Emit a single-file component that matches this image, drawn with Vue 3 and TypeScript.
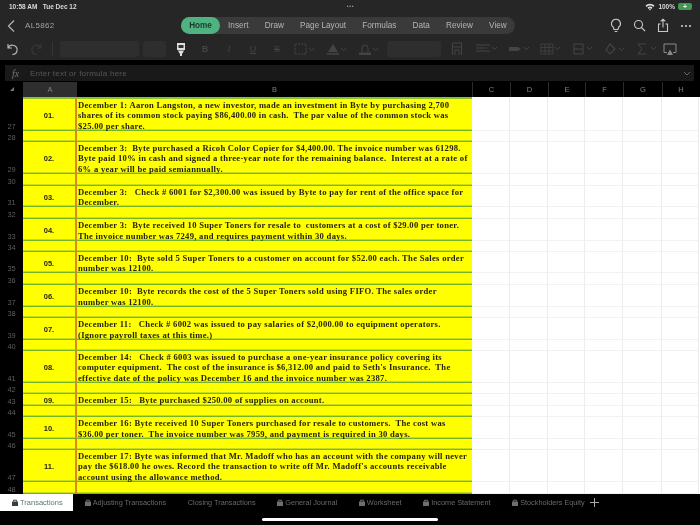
<script setup lang="ts">
interface SheetRow {
  num: number
  h: number
  tag?: string
  lines?: string[]
}

const tabs = ["Home", "Insert", "Draw", "Page Layout", "Formulas", "Data", "Review", "View"]
const columns = ["C", "D", "E", "F", "G", "H"]

const rows: SheetRow[] = [
  { num: 27, h: 34, tag: "01.", lines: [
    "December 1: Aaron Langston, a new investor, made an investment in Byte by purchasing 2,700",
    "shares of its common stock paying $86,400.00 in cash.  The par value of the common stock was",
    "$25.00 per share.",
  ] },
  { num: 28, h: 11 },
  { num: 29, h: 32, tag: "02.", lines: [
    "December 3:  Byte purchased a Ricoh Color Copier for $4,400.00. The invoice number was 61298.",
    "Byte paid 10% in cash and signed a three-year note for the remaining balance.  Interest at a rate of",
    "6% a year will be paid semiannually.",
  ] },
  { num: 30, h: 12 },
  { num: 31, h: 21, tag: "03.", lines: [
    "December 3:   Check # 6001 for $2,300.00 was issued by Byte to pay for rent of the office space for",
    "December.",
  ] },
  { num: 32, h: 12 },
  { num: 33, h: 22, tag: "04.", lines: [
    "December 3:  Byte received 10 Super Toners for resale to  customers at a cost of $29.00 per toner.",
    "The invoice number was 7249, and requires payment within 30 days.",
  ] },
  { num: 34, h: 11 },
  { num: 35, h: 21, tag: "05.", lines: [
    "December 10:  Byte sold 5 Super Toners to a customer on account for $52.00 each. The Sales order",
    "number was 12100.",
  ] },
  { num: 36, h: 12 },
  { num: 37, h: 22, tag: "06.", lines: [
    "December 10:  Byte records the cost of the 5 Super Toners sold using FIFO. The sales order",
    "number was 12100.",
  ] },
  { num: 38, h: 11 },
  { num: 39, h: 22, tag: "07.", lines: [
    "December 11:   Check # 6002 was issued to pay salaries of $2,000.00 to equipment operators.",
    "(Ignore payroll taxes at this time.)",
  ] },
  { num: 40, h: 11 },
  { num: 41, h: 32, tag: "08.", lines: [
    "December 14:   Check # 6003 was issued to purchase a one-year insurance policy covering its",
    "computer equipment.  The cost of the insurance is $6,312.00 and paid to Seth's Insurance.  The",
    "effective date of the policy was December 16 and the invoice number was 2387.",
  ] },
  { num: 42, h: 11 },
  { num: 43, h: 12, tag: "09.", lines: ["December 15:   Byte purchased $250.00 of supplies on account."] },
  { num: 44, h: 11 },
  { num: 45, h: 22, tag: "10.", lines: [
    "December 16: Byte received 10 Super Toners purchased for resale to customers.  The cost was",
    "$36.00 per toner.  The invoice number was 7959, and payment is required in 30 days.",
  ] },
  { num: 46, h: 11 },
  { num: 47, h: 32, tag: "11.", lines: [
    "December 17: Byte was informed that Mr. Madoff who has an account with the company will never",
    "pay the $618.00 he owes. Record the transaction to write off Mr. Madoff's accounts receivable",
    "account using the allowance method.",
  ] },
  { num: 48, h: 12 },
]

const sheets = [
  { name: "Adjusting Transactions", locked: true },
  { name: "Closing Transactions", locked: false },
  { name: "General Journal", locked: true },
  { name: "Worksheet", locked: true },
  { name: "Income Statement", locked: true },
  { name: "Stockholders Equity", locked: true },
]
</script>

<template>
  <div class="screen">
    <div class="chrome">
      <div class="status">
        <span class="time">10:58 AM&nbsp;&nbsp;&nbsp;Tue Dec 12</span>
        <span class="status-dots">•••</span>
        <span class="status-right">
          <svg width="10" height="8" viewBox="0 0 10 8"><path d="M0.5 2.6a6.4 6.4 0 0 1 9 0L8.3 3.9a4.7 4.7 0 0 0-6.6 0zM2.5 4.7a3.6 3.6 0 0 1 5 0L6.3 5.9a1.9 1.9 0 0 0-2.6 0zM5 7.6 3.9 6.5a1.6 1.6 0 0 1 2.2 0z" fill="#ddd" /></svg>
          <span>100%</span>
          <span class="battery">+</span>
        </span>
      </div>

      <div class="nav">
        <svg class="back" width="10" height="14" viewBox="0 0 10 14"><path d="M8 1.5 2.5 7 8 12.5" fill="none" stroke="#b5b5b5" stroke-width="1.2" /></svg>
        <span class="doc-name">AL5862</span>
        <div class="tab-pill">
          <span v-for="(tab, i) in tabs" :key="tab" class="ribbon-tab" :class="{ active: i === 0 }">{{ tab }}</span>
        </div>
        <div class="nav-icons">
          <svg width="12" height="15" viewBox="0 0 12 15"><path d="M6 1.2a4.4 4.4 0 0 0-2.6 8l.6 2.3h4l.6-2.3A4.4 4.4 0 0 0 6 1.2zM4.6 13.5h2.8" fill="none" stroke="#c8c8c8" stroke-width="1.1" /></svg>
          <svg width="13" height="13" viewBox="0 0 13 13"><circle cx="5.5" cy="5.5" r="4" fill="none" stroke="#c8c8c8" stroke-width="1.1" /><path d="m8.5 8.5 3.6 3.6" stroke="#c8c8c8" stroke-width="1.2" /></svg>
          <svg width="12" height="15" viewBox="0 0 12 15"><path d="M3.6 6H1.5v7.5h9V6H8.4M6 9.5V1.2M3.6 3.4 6 1.2l2.4 2.2" fill="none" stroke="#c8c8c8" stroke-width="1.1" /></svg>
          <svg width="12" height="4" viewBox="0 0 12 4"><circle cx="2" cy="2" r="1.1" fill="#c8c8c8" /><circle cx="6" cy="2" r="1.1" fill="#c8c8c8" /><circle cx="10" cy="2" r="1.1" fill="#c8c8c8" /></svg>
        </div>
      </div>

      <div class="toolbar">
        <svg class="undo" width="14" height="14" viewBox="0 0 14 14"><path d="M2 2v4h4M2.3 6a4.6 4.6 0 1 1 4 6.5" fill="none" stroke="#b5b5b5" stroke-width="1.2" /></svg>
        <svg class="redo" width="14" height="14" viewBox="0 0 14 14"><path d="M12 2v4H8M11.7 6a4.6 4.6 0 1 0-4 6.5" fill="none" stroke="#383838" stroke-width="1.2" /></svg>
        <span class="divider"></span>
        <span class="field font-name"></span>
        <span class="field font-size"></span>
        <svg class="brush" width="10" height="15" viewBox="0 0 10 15"><path d="M1 1h8v7H1zM2 8.5h6l-1.5 3h-3zM4 11.5h2V14H4z" fill="#ddd" /><path d="M2.5 3h5v3h-5z" fill="#333" /></svg>
        <span class="tool fmt bold first-fmt">B</span>
        <span class="tool fmt italic">I</span>
        <span class="tool fmt under">U</span>
        <span class="tool fmt strike">S</span>
        <span class="tool wide">
          <svg width="22" height="12" viewBox="0 0 22 12"><path d="M1 1h11v10H1z" fill="none" stroke="#444" stroke-dasharray="2 1" /><path d="m15 5 2.5 2.5L20 5" fill="none" stroke="#444" /></svg>
        </span>
        <span class="tool wide">
          <svg width="22" height="13" viewBox="0 0 22 13"><path d="M7 1 2 9h10z" fill="#444" /><path d="M1 11h12" stroke="#444" stroke-width="1.6" /><path d="m15 5 2.5 2.5L20 5" fill="none" stroke="#444" /></svg>
        </span>
        <span class="tool wide">
          <svg width="22" height="13" viewBox="0 0 22 13"><path d="M4 9V5a3 3 0 0 1 6 0v4" fill="none" stroke="#444" /><path d="M1 9.5h12V12H1z" fill="#444" /><path d="m15 5 2.5 2.5L20 5" fill="none" stroke="#444" /></svg>
        </span>
        <span class="field size-box"></span>
        <svg class="wrap" width="12" height="14" viewBox="0 0 12 14"><path d="M1.5 1h9v12M1.5 13V1M1.5 5h9M4 13V8h4v5" fill="none" stroke="#444" /></svg>
        <span class="tool wide gap-a">
          <svg width="22" height="10" viewBox="0 0 22 10"><path d="M0 1h14M0 4h11M0 7h14" stroke="#444" /><path d="m16 3 2.5 2.5L21 3" fill="none" stroke="#444" /></svg>
        </span>
        <span class="tool wide">
          <svg width="22" height="10" viewBox="0 0 22 10"><path d="M1 3h9l3 2-3 2H1z" fill="#444" /><path d="m16 3 2.5 2.5L21 3" fill="none" stroke="#444" /></svg>
        </span>
        <span class="tool wide">
          <svg width="22" height="12" viewBox="0 0 22 12"><path d="M1 1h12v10H1zM1 4.5h12M1 8h12M5 1v10M9 1v10" fill="none" stroke="#444" stroke-width=".8" /><path d="m15 4 2.5 2.5L20 4" fill="none" stroke="#444" /></svg>
        </span>
        <span class="tool wide">
          <svg width="22" height="12" viewBox="0 0 22 12"><path d="M2 1h9v10H2zM2 6h9" fill="none" stroke="#444" /><path d="m15 4 2.5 2.5L20 4" fill="none" stroke="#444" /></svg>
        </span>
        <span class="tool wide">
          <svg width="22" height="13" viewBox="0 0 22 13"><path d="m6 1 5 5-5 5-4-4z" fill="none" stroke="#444" stroke-width="1.2" /><path d="m15 5 2.5 2.5L20 5" fill="none" stroke="#444" /></svg>
        </span>
        <span class="tool wide">
          <svg width="22" height="12" viewBox="0 0 22 12"><path d="M10 1H2l4 5-4 5h8" fill="none" stroke="#444" /><path d="m15 4 2.5 2.5L20 4" fill="none" stroke="#444" /></svg>
        </span>
        <svg class="present" width="14" height="13" viewBox="0 0 14 13"><path d="M4 9.5H1V1h12v8.5h-3" fill="none" stroke="#8a8a8a" /><path d="M7 6.5 4 12h6z" fill="#8a8a8a" /></svg>
      </div>
    </div>

    <div class="formula-wrap">
      <div class="formula">
        <span class="fx">fx</span>
        <span class="placeholder">Enter text or formula here</span>
        <svg class="caret" width="8" height="5" viewBox="0 0 8 5"><path d="m1 1 3 3 3-3" fill="none" stroke="#666" /></svg>
      </div>
    </div>

    <div class="grid-row head">
      <span class="corner"><i></i></span>
      <span class="head-a">A</span>
      <span class="head-cell">B</span>
      <span v-for="col in columns" :key="col" class="head-cell line">{{ col }}</span>
    </div>

    <div class="sheet">
      <div v-for="(row, i) in rows" :key="row.num" class="grid-row" :style="{ height: row.h + 'px' }">
        <span class="row-num">{{ row.num }}</span>
        <span class="cell-a" :class="{ first: i === 0 }">{{ row.tag }}</span>
        <div class="cell-b" :class="{ first: i === 0 }">
          <div v-for="line in row.lines" :key="line" class="text-line">{{ line }}</div>
        </div>
        <span v-for="col in columns" :key="col" class="blank"></span>
      </div>
    </div>

    <div class="tabbar">
      <div class="sheet-tabs">
        <span class="sheet-tab current">
          <svg class="lock" width="6" height="7" viewBox="0 0 6 7"><path d="M0 2.5h6V7H0z" fill="#3d3d3d" /><path d="M1.5 2.5V1.2h3v1.3" fill="none" stroke="#3d3d3d" /></svg>
          Transactions
        </span>
        <span v-for="sheet in sheets" :key="sheet.name" class="sheet-tab">
          <svg v-if="sheet.locked" class="lock" width="6" height="7" viewBox="0 0 6 7"><path d="M0 2.5h6V7H0z" fill="#6e6e6e" /><path d="M1.5 2.5V1.2h3v1.3" fill="none" stroke="#6e6e6e" /></svg>
          {{ sheet.name }}
        </span>
        <svg class="plus" width="9" height="9" viewBox="0 0 9 9"><path d="M4.5 0v9M0 4.5h9" stroke="#aaa" /></svg>
      </div>
      <div class="home-bar"></div>
    </div>
  </div>
</template>

<style scoped>
.screen {
  width: 700px;
  height: 525px;
  overflow: hidden;
  display: flex;
  flex-direction: column;
  background: #000;
  font-family: "Liberation Sans", Arial, sans-serif;
  filter: blur(0.35px);
}

.chrome {
  height: 60px;
  background: #262626;
}

.status {
  height: 13px;
  padding: 0 8px 0 9px;
  display: grid;
  grid-template-columns: 1fr auto 1fr;
  align-items: center;
  font-size: 6.5px;
  font-weight: bold;
  color: #d8d8d8;
}

.status-dots {
  font-size: 5px;
  letter-spacing: 0.8px;
  color: #999;
  margin-top: -2px;
}

.status-right {
  display: flex;
  justify-content: flex-end;
  align-items: center;
  gap: 3px;
}

.battery {
  width: 14px;
  height: 7px;
  border-radius: 2px;
  background: #3f9a4f;
  color: #eee;
  font-size: 7px;
  line-height: 7px;
  text-align: center;
}

.nav {
  height: 25px;
  display: flex;
  align-items: center;
}

.back {
  margin-left: 6px;
}

.doc-name {
  margin-left: 9px;
  width: 156px;
  font-size: 8px;
  letter-spacing: 0.3px;
  color: #a0a0a0;
}

.tab-pill {
  width: 334px;
  height: 17px;
  border-radius: 9px;
  background: #3a3a3a;
  display: flex;
  align-items: center;
  font-size: 8.2px;
  color: #b4b4b4;
}

.ribbon-tab {
  flex-shrink: 0;
  padding: 0 8.1px;
  line-height: 17px;
  white-space: nowrap;
}

.ribbon-tab.active {
  width: 39px;
  padding: 0;
  text-align: center;
  border-radius: 9px;
  background: #4fb381;
  color: #1c3a2c;
  font-weight: bold;
}

.nav-icons {
  margin-left: 95px;
  display: flex;
  align-items: center;
  gap: 11px;
}

.toolbar {
  height: 22px;
  display: flex;
  align-items: center;
}

.undo {
  margin-left: 6px;
}

.redo {
  margin-left: 9px;
}

.divider {
  width: 1px;
  height: 15px;
  margin: 0 7px 0 9px;
  background: #343434;
}

.field {
  height: 16px;
  background: #2e2e2e;
  border-radius: 2px;
}

.font-name {
  width: 79px;
}

.font-size {
  width: 23px;
  margin-left: 4px;
}

.brush {
  margin: 0 0 0 10px;
}

.tool {
  width: 24px;
  text-align: center;
  color: #444;
  display: flex;
  justify-content: center;
}

.fmt {
  font-size: 9px;
}

.first-fmt {
  margin-left: 7px;
}

.bold {
  font-weight: bold;
}

.italic {
  font-style: italic;
  font-family: "Liberation Serif", serif;
}

.under {
  text-decoration: underline;
}

.strike {
  text-decoration: line-through;
}

.wide {
  width: 32px;
}

.size-box {
  width: 54px;
  margin-left: 2px;
}

.wrap {
  margin-left: 10px;
}

.gap-a {
  margin-left: 8px;
}

.formula-wrap {
  height: 22px;
  padding: 5px 6px 1px 5px;
  box-sizing: border-box;
}

.formula {
  height: 16px;
  background: #191919;
  display: flex;
  align-items: center;
}

.fx {
  margin-left: 7px;
  width: 18px;
  font: italic 10px "Liberation Serif", serif;
  color: #777;
}

.placeholder {
  font-size: 8.1px;
  letter-spacing: 0.2px;
  color: #565656;
}

.caret {
  margin-left: auto;
  margin-right: 3px;
}

.grid-row {
  display: grid;
  grid-template-columns: 23px 54px 395px 38px 38px 37px 38px 39px 37px;
  grid-template-rows: minmax(0, 1fr);
}

.head {
  height: 15px;
  line-height: 15px;
  font-size: 7.5px;
  color: #808080;
  text-align: center;
}

.corner {
  position: relative;
}

.corner i {
  position: absolute;
  left: 10px;
  top: 5px;
  border-left: 4px solid transparent;
  border-bottom: 4px solid #777;
}

.head-a {
  background: #2e2e2e;
}

.head-cell.line {
  border-left: 1px solid #2a2a2a;
}

.sheet {
  height: 397px;
  background: #fff;
}

.row-num {
  min-height: 0;
  background: #000;
  color: #5e5e5e;
  font-size: 7.4px;
  line-height: 9px;
  display: flex;
  align-items: flex-end;
  justify-content: center;
}

.cell-a,
.cell-b {
  min-height: 0;
  box-sizing: border-box;
  background: #ffff00;
  border-bottom: 1px solid #74b52a;
  box-shadow: inset 0 -1px 0 #c4e01c;
  color: #24240f;
}

.cell-a {
  padding-top: 2px;
  border-right: 2px solid #d98a1e;
  display: flex;
  align-items: center;
  justify-content: center;
  font-size: 7.5px;
  font-weight: bold;
}

.cell-b {
  padding: 2px 0 0 1px;
  display: flex;
  flex-direction: column;
  justify-content: center;
  font: bold 8.6px/10.4px "Liberation Serif", "Times New Roman", serif;
  letter-spacing: 0.28px;
}

.first {
  border-top: 2px solid #86c42a;
}

.text-line {
  flex-shrink: 0;
  white-space: pre;
}

.blank {
  box-sizing: border-box;
  background: #fff;
  border-right: 1px solid #ececec;
  border-bottom: 1px solid #f2f2f2;
}

.tabbar {
  flex: 1;
  background: #000;
}

.sheet-tabs {
  height: 17px;
  display: flex;
  align-items: center;
  gap: 21.7px;
  font-size: 7.3px;
  color: #6a6a6a;
}

.sheet-tab {
  display: flex;
  align-items: center;
  gap: 1px;
  white-space: nowrap;
}

.sheet-tab.current {
  width: 73px;
  height: 17px;
  margin-right: -10px;
  padding-left: 12px;
  box-sizing: border-box;
  background: #fff;
  color: #5a7a6c;
  font-size: 7.5px;
}

.lock {
  margin-right: 1px;
}

.plus {
  margin-left: -16px;
}

.home-bar {
  width: 176px;
  height: 3px;
  margin: 7px 0 0 262px;
  border-radius: 2px;
  background: #fff;
}
</style>
